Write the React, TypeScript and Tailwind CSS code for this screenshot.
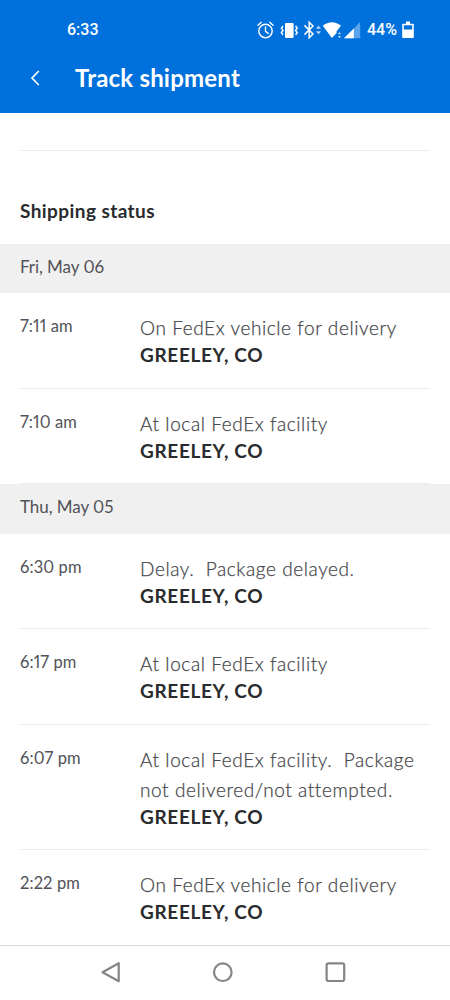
import React from 'react';

interface ShipmentEvent {
  time: string;
  lines: string[];
  location: string;
}

interface ShipmentDay {
  date: string;
  events: ShipmentEvent[];
}

const days: ShipmentDay[] = [
  {
    date: 'Fri, May 06',
    events: [
      { time: '7:11 am', lines: ['On FedEx vehicle for delivery'], location: 'GREELEY, CO' },
      { time: '7:10 am', lines: ['At local FedEx facility'], location: 'GREELEY, CO' },
    ],
  },
  {
    date: 'Thu, May 05',
    events: [
      { time: '6:30 pm', lines: ['Delay.  Package delayed.'], location: 'GREELEY, CO' },
      { time: '6:17 pm', lines: ['At local FedEx facility'], location: 'GREELEY, CO' },
      {
        time: '6:07 pm',
        lines: ['At local FedEx facility.  Package', 'not delivered/not attempted.'],
        location: 'GREELEY, CO',
      },
      { time: '2:22 pm', lines: ['On FedEx vehicle for delivery'], location: 'GREELEY, CO' },
    ],
  },
];

const StatusIcons: React.FC = () => (
  <svg className="w-[104px] h-5" viewBox="257 19 104 20" fill="none">
    {/* Alarm */}
    <g stroke="white" strokeWidth="1.4" strokeLinecap="round">
      <circle cx="265.5" cy="30" r="6.7" />
      <path d="M265.5 26v4.2l2.7 2.2M258 24.2l3.2-2.9M273 24.2l-3.2-2.9" />
    </g>
    {/* Vibrate */}
    <rect x="285" y="22" width="8.6" height="15" rx="1" fill="white" />
    <path d="M283 25l-1.6 2.2 1.6 2.2-1.6 2.2 1.6 2.2M295.6 25l1.6 2.2-1.6 2.2 1.6 2.2-1.6 2.2" stroke="white" strokeWidth="1.5" />
    {/* Bluetooth */}
    <path d="M304.5 24.4l8.5 8.6-3.8 3.8V21.2l3.8 3.8-8.5 8.6" stroke="white" strokeWidth="1.5" />
    <path d="M316 27.8l2.5-3.2 2.5 3.2zM316 30.3l2.5 3.2 2.5-3.2z" fill="#b5d5f8" />
    {/* Wifi */}
    <path d="M322.8 24.8c5.4-4.7 12.8-4.7 18.2 0l-4.4 5.4v1.8l-4.7 5z" fill="white" />
    <path d="M337.8 33.2l1.7-2.2 1.7 2.2zM337.8 35l1.7 2.2 1.7-2.2z" fill="#b5d5f8" />
    {/* Signal */}
    <path d="M344 37.2L360.2 21v16.2z" fill="#5ba4ee" />
    <path d="M344 37.2l9.8-9.8v9.8z" fill="white" />
  </svg>
);

const EventRow: React.FC<{ event: ShipmentEvent }> = ({ event }) => (
  <div className="mx-5 flex pt-5 pb-[20.5px] border-b border-[#ececec]">
    <div className="w-[120px] shrink-0 text-[16.5px] leading-[27px] tracking-[0.1px] proportional-nums text-[#515257]">{event.time}</div>
    <div>
      {event.lines.map((line) => (
        <p key={line} className="text-[19px] leading-[30px] font-light tracking-[0.59px] whitespace-pre text-[#46474a] [-webkit-text-stroke:0.25px]">{line}</p>
      ))}
      <p className="text-[19px] leading-6 font-bold tracking-[0.65px] text-[#2a2b2e]">{event.location}</p>
    </div>
  </div>
);

const App: React.FC = () => {
  return (
    <div className="flex flex-col w-[450px] h-[1000px] overflow-hidden bg-white font-['Lato',sans-serif]">
      <header className="h-[113px] shrink-0 bg-[#0071dc] text-white">
        <div className="flex items-center h-[59px] pl-[67px] pr-9 font-['Roboto',sans-serif] text-base font-medium">
          <span>6:33</span>
          <div className="ml-auto flex items-center">
            <StatusIcons />
            <span className="ml-1.5 w-[31px] whitespace-nowrap">44%</span>
            <svg className="ml-1 w-3 h-[18px]" viewBox="0 0 12 18" fill="none">
              <path d="M1 3.5h10v12.7H1z" stroke="white" strokeWidth="1.6" strokeLinejoin="round" />
              <path d="M4 0.5h4v2.5H4zM1 8.5h10V16H1z" fill="white" />
            </svg>
          </div>
        </div>
        <div className="flex items-center h-[38px] pl-[30px]">
          <svg className="w-2.5 h-4" viewBox="0 0 10 16" fill="none" stroke="white" strokeWidth="1.7">
            <path d="M8.8 1L2 8l6.8 7" />
          </svg>
          <h1 className="ml-[35px] text-2xl font-bold tracking-[0.2px] whitespace-nowrap">Track shipment</h1>
        </div>
      </header>

      <main className="flex-1 min-h-0 overflow-hidden">
        <div className="mx-5 h-[38px] border-b border-[#ececec]" />
        <h2 className="h-[92.5px] pt-[46px] pl-5 text-[19px] leading-7 font-bold tracking-[0.42px] text-[#2a2b2e]">Shipping status</h2>
        {days.map((day) => (
          <section key={day.date}>
            <div className="h-[49.5px] px-5 bg-[#f0f0f0] text-[17px] leading-[46px] tracking-[-0.05px] proportional-nums text-[#515257]">{day.date}</div>
            {day.events.map((event) => (
              <EventRow key={event.time} event={event} />
            ))}
          </section>
        ))}
      </main>

      {/* System navigation */}
      <nav className="h-[55px] shrink-0 border-t border-[#d8d9d9] bg-white">
        <svg className="w-[450px] h-[54px]" viewBox="0 946 450 54" fill="none" stroke="#858585" strokeWidth="2.2" strokeLinejoin="round">
          <path d="M102.5 972.2l16.2-9v18z" />
          <circle cx="222.8" cy="972.2" r="8.8" />
          <rect x="326.6" y="963.4" width="17.6" height="17.6" rx="2" />
        </svg>
      </nav>
    </div>
  );
};

export default App;
